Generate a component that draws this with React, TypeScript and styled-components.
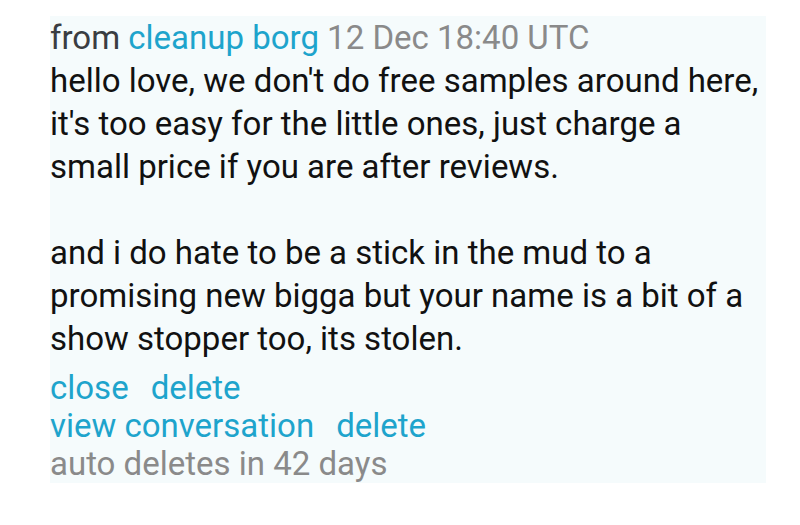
import React from "react";
import styled, { createGlobalStyle } from "styled-components";

const GlobalStyle = createGlobalStyle`
  html, body {
    margin: 0;
    padding: 0;
    background: #ffffff;
  }
  body {
    font-family: Roboto, "Noto Sans", "Liberation Sans", sans-serif;
  }
`;

const Page = styled.div`
  padding: 16px 34px 0 50px;
`;

const Message = styled.div`
  width: 716px;
  background: #f5fbfc;
  font-size: 33px;
  color: #111111;
`;

const Header = styled.div`
  line-height: 43px;
  color: #3a3d42;
`;

const Name = styled.span`
  color: #1ea4cc;
`;

const Muted = styled.span`
  color: #8a8a8a;
`;

const Body = styled.div`
  line-height: 43px;
`;

const Paragraph = styled.p`
  margin: 0;
  & + & {
    margin-top: 43px;
  }
`;

const Footer = styled.div`
  margin-top: 9px;
  line-height: 38px;
`;

const LinkRow = styled.div`
  display: flex;
  gap: 22px;
`;

const Link = styled.a`
  color: #1ea4cc;
  text-decoration: none;
  cursor: pointer;
`;

const Note = styled.div`
  color: #8a8a8a;
`;

export default function App() {
  return (
    <>
      <GlobalStyle />
      <Page>
        <Message>
          <Header>
            from <Name>cleanup borg</Name> <Muted>12 Dec 18:40 UTC</Muted>
          </Header>
          <Body>
            <Paragraph>
              hello love, we don't do free samples around here, it's too easy
              for the little ones, just charge a small price if you are after
              reviews.
            </Paragraph>
            <Paragraph>
              and i do hate to be a stick in the mud to a promising new bigga
              but your name is a bit of a show stopper too, its stolen.
            </Paragraph>
          </Body>
          <Footer>
            <LinkRow>
              <Link>close</Link>
              <Link>delete</Link>
            </LinkRow>
            <LinkRow>
              <Link>view conversation</Link>
              <Link>delete</Link>
            </LinkRow>
            <Note>auto deletes in 42 days</Note>
          </Footer>
        </Message>
      </Page>
    </>
  );
}
